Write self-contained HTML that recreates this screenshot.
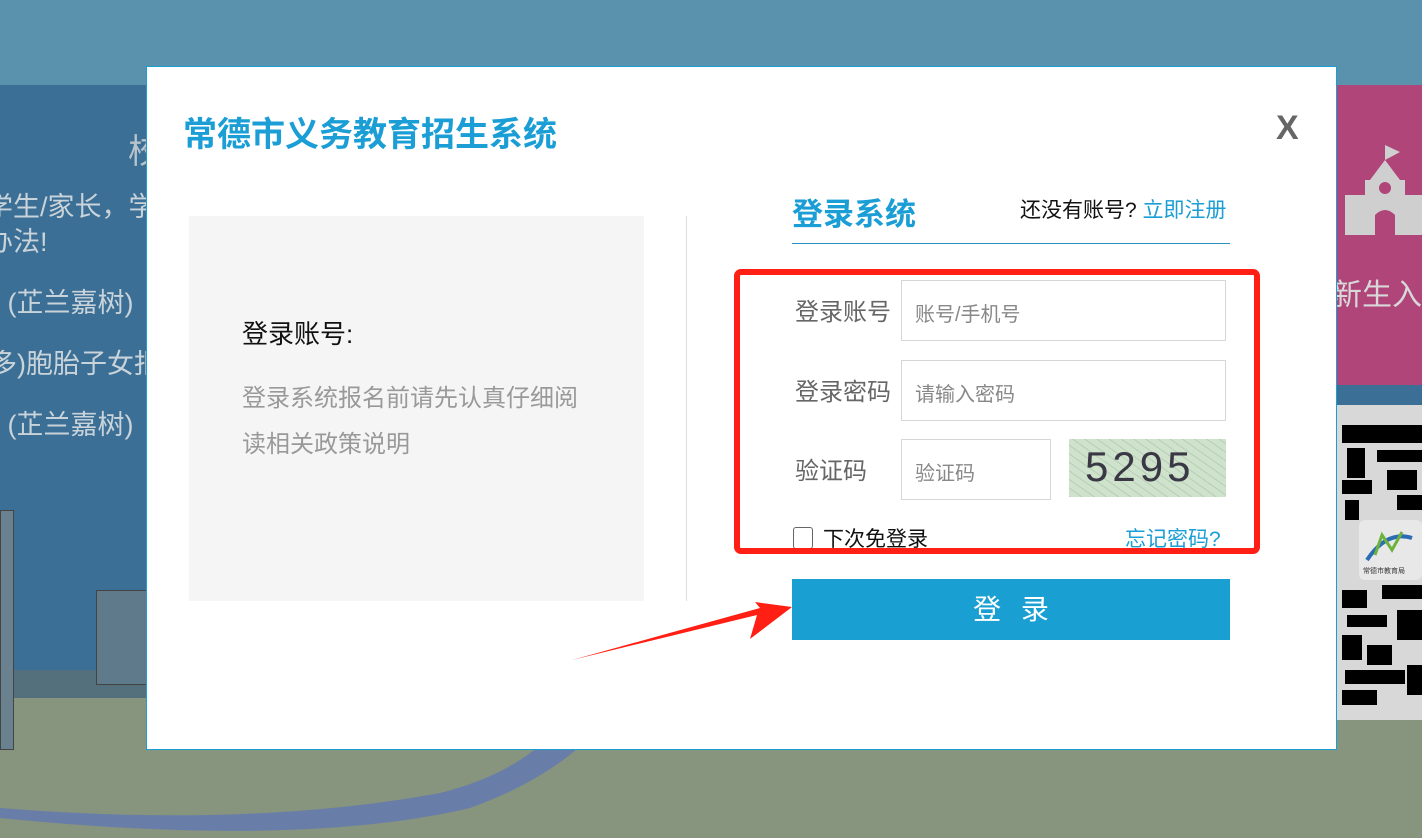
<!DOCTYPE html>
<html><head><meta charset="utf-8"><style>
*{margin:0;padding:0;box-sizing:border-box}
body{width:1422px;height:838px;overflow:hidden;position:relative;font-family:"Liberation Sans","Noto Sans CJK SC",sans-serif;background:#3d6f94}
.abs{position:absolute}
</style></head><body>
<div class="abs" style="left:0;top:0;width:1422px;height:85px;background:#5a91ad"></div>
<div class="abs" style="left:0;top:85px;width:1422px;height:613px;background:#3b6f95"></div>
<div class="abs" style="left:0;top:670px;width:1422px;height:40px;background:#54707d"></div>
<div class="abs" style="left:0;top:698px;width:1422px;height:140px;background:#87947e"></div>
<svg class="abs" style="left:0;top:698px" width="1422" height="140"><path d="M0 120 Q300 150 470 110 Q580 70 620 0 L580 0 Q540 70 440 95 Q250 130 0 110Z" fill="#687ea9"/></svg>
<div class="abs" style="left:96px;top:590px;width:60px;height:95px;background:#5f7a8a;border:1px solid #444"></div>
<div class="abs" style="left:0;top:510px;width:14px;height:240px;background:#6a8190;border:1px solid #444"></div>
<div class="abs" style="left:0;top:190px;color:#c9d3da;font-size:27px;line-height:1.3">
<div style="position:absolute;left:128px;top:-60px;font-size:34px;color:#b8c4cc">校</div>
<div style="white-space:nowrap;margin-left:-14px">学生/家长，学</div><div style="margin-left:-14px">办法!</div>
<div style="margin-top:26px;white-space:nowrap">&nbsp;(芷兰嘉树)</div>
<div style="margin-top:26px;white-space:nowrap;margin-left:-10px">多)胞胎子女报</div>
<div style="margin-top:26px;white-space:nowrap">&nbsp;(芷兰嘉树)</div>
</div>
<div class="abs" style="left:1337px;top:85px;width:85px;height:300px;background:#b0457a"></div>
<svg class="abs" style="left:1345px;top:140px" width="77" height="95"><path d="M40 5 L40 20 L55 12 L40 5Z M40 20 L25 40 L20 40 L20 55 L0 55 L0 95 L30 95 L30 75 Q40 65 50 75 L50 95 L77 95 L77 55 L60 55 L60 40 L55 40Z" fill="#cfcfcf"/><circle cx="40" cy="48" r="6" fill="#b0457a"/></svg>
<div class="abs" style="left:1332px;top:270px;color:#d8d8d8;font-size:30px;white-space:nowrap">新生入学</div>
<div class="abs" style="left:1337px;top:405px;width:85px;height:315px;background:#d8d8d8"></div>
<svg class="abs" style="left:1337px;top:420px" width="85" height="290">
<g fill="#000">
<rect x="5" y="5" width="80" height="18"/><rect x="10" y="28" width="18" height="30"/><rect x="40" y="30" width="45" height="12"/><rect x="5" y="60" width="30" height="14"/><rect x="50" y="50" width="30" height="20"/><rect x="8" y="80" width="14" height="20"/><rect x="60" y="75" width="25" height="15"/>
<rect x="5" y="170" width="25" height="18"/><rect x="45" y="165" width="40" height="14"/><rect x="10" y="195" width="40" height="12"/><rect x="60" y="190" width="25" height="30"/><rect x="5" y="215" width="20" height="25"/><rect x="30" y="225" width="25" height="20"/><rect x="8" y="250" width="60" height="14"/><rect x="70" y="245" width="15" height="30"/><rect x="5" y="270" width="35" height="15"/>
</g>
<rect x="22" y="100" width="63" height="60" rx="6" fill="#e8e8e8"/>
<path d="M30 140 Q50 110 75 118" stroke="#2a6db2" stroke-width="4" fill="none"/><path d="M38 135 L45 115 L55 130 L65 112" stroke="#6cb33e" stroke-width="3" fill="none"/>
<text x="26" y="153" font-size="7" fill="#333">常德市教育局</text>
</svg>
<div class="abs" style="left:146px;top:66px;width:1191px;height:684px;background:#fff;border:1px solid #1a9fd4">
<div class="abs" style="left:36px;top:40px;font-size:34px;font-weight:bold;color:#1b9ed5;white-space:nowrap">常德市义务教育招生系统</div>
<div class="abs" style="left:1129px;top:42px;font-size:34px;font-weight:bold;color:#666">X</div>
<div class="abs" style="left:42px;top:149px;width:455px;height:385px;background:#f5f5f5">
<div class="abs" style="left:53px;top:98px;font-size:26px;color:#111;white-space:nowrap">登录账号:</div>
<div class="abs" style="left:53px;top:160px;width:346px;font-size:24px;line-height:46px;color:#999">登录系统报名前请先认真仔细阅读相关政策说明</div>
</div>
<div class="abs" style="left:539px;top:149px;width:1px;height:385px;background:#ddd"></div>
<div class="abs" style="left:645px;top:122px;font-size:31px;font-weight:bold;color:#1b9ed5;white-space:nowrap">登录系统</div>
<div class="abs" style="left:873px;top:127px;font-size:21px;color:#111;white-space:nowrap">还没有账号? <span style="color:#1b9ed5">立即注册</span></div>
<div class="abs" style="left:645px;top:176px;width:438px;height:1px;background:#2a8fbf"></div>
<div class="abs" style="left:648px;top:225px;font-size:24px;color:#666">登录账号</div>
<div class="abs" style="left:754px;top:213px;width:325px;height:61px;border:1px solid #d6d6d6;font-size:20px;color:#888;padding:17px 13px">账号/手机号</div>
<div class="abs" style="left:648px;top:305px;font-size:24px;color:#666">登录密码</div>
<div class="abs" style="left:754px;top:293px;width:325px;height:61px;border:1px solid #d6d6d6;font-size:20px;color:#888;padding:17px 13px">请输入密码</div>
<div class="abs" style="left:648px;top:384px;font-size:24px;color:#666">验证码</div>
<div class="abs" style="left:754px;top:372px;width:150px;height:61px;border:1px solid #d6d6d6;font-size:20px;color:#888;padding:17px 13px">验证码</div>
<div class="abs" style="left:922px;top:372px;width:157px;height:58px;background:#cfe2cc;background-image:repeating-linear-gradient(35deg,rgba(140,170,140,.35) 0 1px,transparent 1px 7px);font-family:'Liberation Sans',sans-serif;font-size:42px;color:#3a3844;letter-spacing:4px;padding-left:16px;line-height:56px">5295</div>
<div class="abs" style="left:646px;top:460px;width:20px;height:22px;border:1px solid #666;border-radius:3px"></div>
<div class="abs" style="left:676px;top:456px;font-size:21px;color:#111">下次免登录</div>
<div class="abs" style="left:978px;top:456px;font-size:21px;color:#1b9ed5">忘记密码?</div>
<div class="abs" style="left:587px;top:202px;width:526px;height:285px;border:6px solid #ff1f14;border-radius:7px"></div>
<div class="abs" style="left:645px;top:512px;width:438px;height:61px;background:#1a9fd3;color:#fff;font-size:28px;text-align:center;line-height:61px;letter-spacing:0;word-spacing:12px">登 录</div>
</div>
<svg class="abs" style="left:0;top:0" width="1422" height="838"><path d="M572 660 L757 615 L750 639 L792 607 L755 602 L760 608Z" fill="#ff1f14"/></svg>
</body></html>
